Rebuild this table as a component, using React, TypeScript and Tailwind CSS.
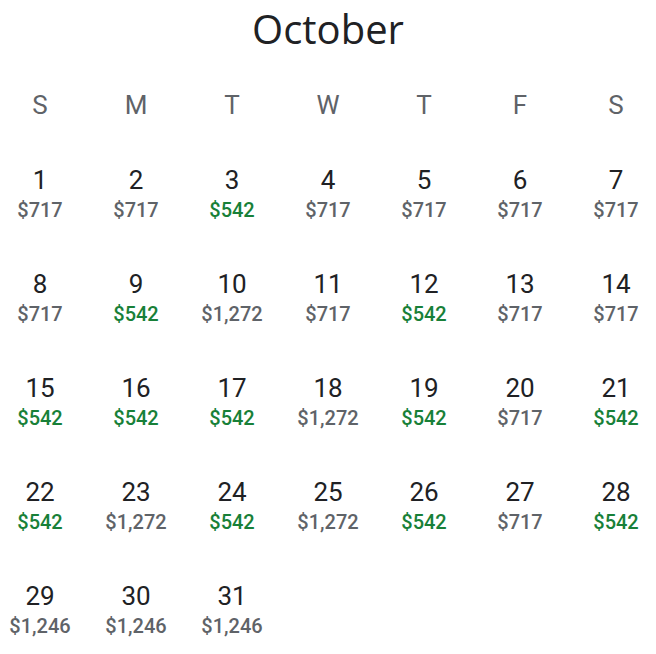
const weekdays = ["S", "M", "T", "W", "T", "F", "S"];

type Day = { n: number; price: string; low?: boolean };

const days: Day[] = [
  { n: 1, price: "$717" },
  { n: 2, price: "$717" },
  { n: 3, price: "$542", low: true },
  { n: 4, price: "$717" },
  { n: 5, price: "$717" },
  { n: 6, price: "$717" },
  { n: 7, price: "$717" },
  { n: 8, price: "$717" },
  { n: 9, price: "$542", low: true },
  { n: 10, price: "$1,272" },
  { n: 11, price: "$717" },
  { n: 12, price: "$542", low: true },
  { n: 13, price: "$717" },
  { n: 14, price: "$717" },
  { n: 15, price: "$542", low: true },
  { n: 16, price: "$542", low: true },
  { n: 17, price: "$542", low: true },
  { n: 18, price: "$1,272" },
  { n: 19, price: "$542", low: true },
  { n: 20, price: "$717" },
  { n: 21, price: "$542", low: true },
  { n: 22, price: "$542", low: true },
  { n: 23, price: "$1,272" },
  { n: 24, price: "$542", low: true },
  { n: 25, price: "$1,272" },
  { n: 26, price: "$542", low: true },
  { n: 27, price: "$717" },
  { n: 28, price: "$542", low: true },
  { n: 29, price: "$1,246" },
  { n: 30, price: "$1,246" },
  { n: 31, price: "$1,246" },
];

export default function App() {
  return (
    <div className="w-[656px] h-[654px] bg-white overflow-hidden font-['Roboto',sans-serif]">
      <div className="h-[58px] flex items-center justify-center">
        <h2 className="text-[40px] leading-none text-[#202124] font-['Open_Sans',sans-serif]">
          October
        </h2>
      </div>
      <div className="mt-[22px] h-[50px] grid grid-cols-7 gap-x-4 items-center text-center">
        {weekdays.map((d, i) => (
          <span key={i} className="text-[26px] text-[#5f6368]">
            {d}
          </span>
        ))}
      </div>
      <div className="grid grid-cols-7 gap-x-4 text-center">
        {days.map((d) => (
          <div key={d.n} className="h-[104px] pt-[35px] flex flex-col items-center">
            <span className="text-[26px] leading-[30px] text-[#202124]">{d.n}</span>
            <span
              className={`mt-[2px] text-[20px] leading-[26px] font-medium ${
                d.low ? "text-[#188038]" : "text-[#5f6368]"
              }`}
            >
              {d.price}
            </span>
          </div>
        ))}
      </div>
    </div>
  );
}
